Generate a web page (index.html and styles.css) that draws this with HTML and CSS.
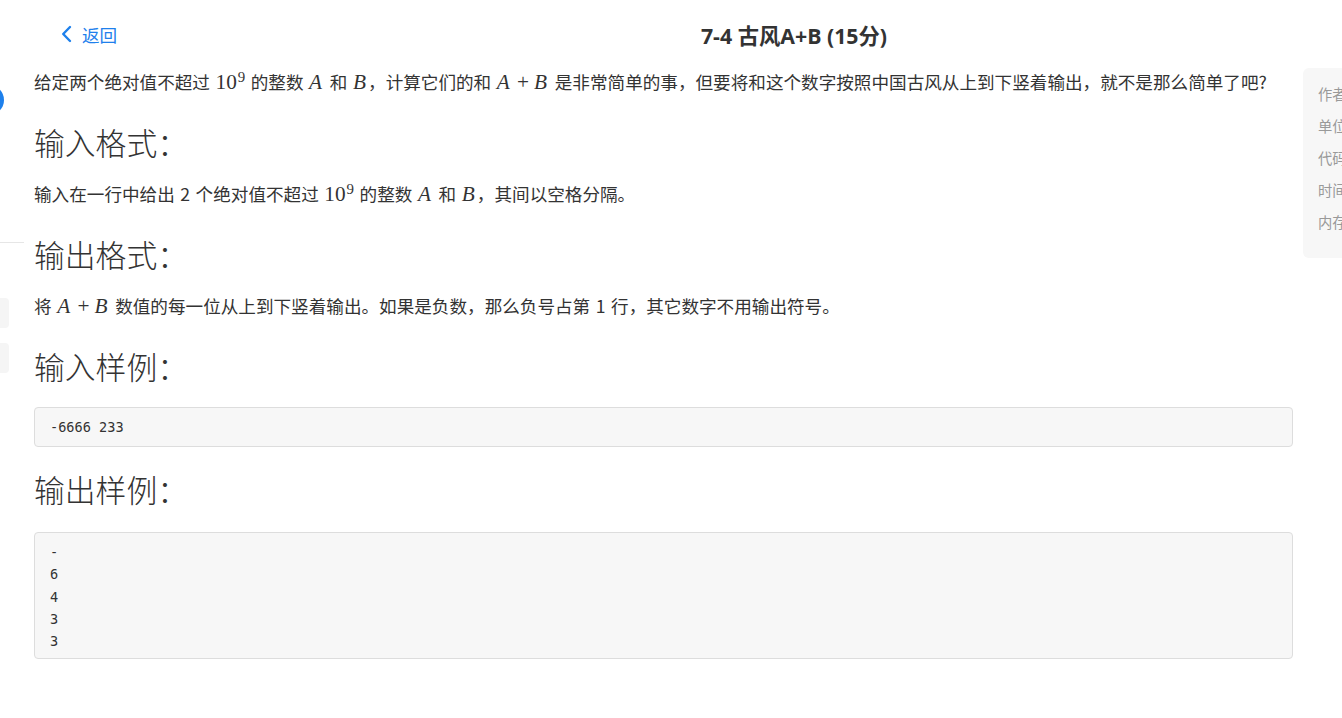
FILE: index.html
```html
<!DOCTYPE html>
<html>
<head>
<meta charset="utf-8">
<link rel="stylesheet" href="styles.css">
</head>
<body>

<div class="page">
  <div class="header">
    <a href="#" class="back">
      <svg class="back-icon" width="13" height="18" viewBox="0 0 13 18"><path d="M10 2 L3.2 9 L10 16" fill="none" stroke="currentColor" stroke-width="2.4" stroke-linecap="round" stroke-linejoin="round"/></svg>
      <span>返回</span>
    </a>
    <h1 class="title">7-4 古风A+B (15分)</h1>
    <div></div>
  </div>

  <div class="layout">
    <div class="sidebar">
      <div class="avatar"></div>
      <div class="divider"></div>
      <div class="side-item"></div>
      <div class="side-item"></div>
    </div>

    <div class="content">
      <p>给定两个绝对值不超过 <span class="math">10<sup>9</sup></span> 的整数 <span class="math"><i>A</i></span> 和 <span class="math"><i>B</i></span>，计算它们的和 <span class="math"><i>A</i><span class="op">+</span><i>B</i></span> 是非常简单的事，但要将和这个数字按照中国古风从上到下竖着输出，就不是那么简单了吧?</p>

      <h2>输入格式：</h2>
      <p>输入在一行中给出 2 个绝对值不超过 <span class="math">10<sup>9</sup></span> 的整数 <span class="math"><i>A</i></span> 和 <span class="math"><i>B</i></span>，其间以空格分隔。</p>

      <h2>输出格式：</h2>
      <p>将 <span class="math"><i>A</i><span class="op">+</span><i>B</i></span> 数值的每一位从上到下竖着输出。如果是负数，那么负号占第 1 行，其它数字不用输出符号。</p>

      <h2>输入样例：</h2>
      <pre class="sample">-6666 233</pre>

      <h2>输出样例：</h2>
      <pre class="sample sample-tall">-
6
4
3
3</pre>
    </div>

    <div class="info">
      <div class="info-row">作者 CHEN, Yue</div>
      <div class="info-row">单位 浙江大学</div>
      <div class="info-row">代码长度限制 16 KB</div>
      <div class="info-row">时间限制 400 ms</div>
      <div class="info-row">内存限制 64 MB</div>
    </div>
  </div>
</div>

</body>
</html>
```

FILE: styles.css
```css
html, body {
  margin: 0;
  padding: 0;
  overflow: hidden;
  background-color: #fff;
}

body {
  font-family: "Noto Sans CJK SC", "Noto Sans", sans-serif;
  color: #333;
}

.page {
  width: 1588px;
}

.header {
  height: 68px;
  display: grid;
  grid-template-columns: 1fr auto 1fr;
  align-items: center;
}

.back {
  display: flex;
  align-items: center;
  padding-left: 60px;
  color: #1e80ec;
  text-decoration: none;
  font-size: 17.6px;
}

.back-icon {
  margin-right: 9px;
  margin-top: -1px;
}

.title {
  margin: 0;
  font-family: "Open Sans", "Noto Sans CJK SC", sans-serif;
  font-size: 21.3px;
  font-weight: 700;
  color: #333;
}

.layout {
  display: flex;
  align-items: flex-start;
}

.sidebar {
  width: 24px;
  flex-shrink: 0;
  display: flex;
  flex-direction: column;
  overflow: hidden;
  margin-top: -68px;
  padding-top: 85px;
}

.avatar {
  width: 30px;
  height: 30px;
  border-radius: 50%;
  background-color: #1e80ec;
  margin-left: -26px;
}

.divider {
  height: 1px;
  background-color: #e6e6e6;
  margin-top: 127px;
}

.side-item {
  width: 9px;
  height: 30px;
  background-color: #f5f5f5;
  border-radius: 0 4px 4px 0;
  margin-top: 55px;
}

.side-item + .side-item {
  margin-top: 15px;
}

.content {
  width: 1259px;
  flex-shrink: 0;
  margin-left: 10px;
  padding-top: 2px;
}

.content p {
  margin: 0 0 25px;
  font-size: 17.6px;
  line-height: 24px;
  word-spacing: 1.6px;
  white-space: nowrap;
}

.content h2 {
  margin: 0 0 18px;
  font-size: 30.8px;
  font-weight: 300;
  line-height: 45px;
}

.math {
  font-family: "Liberation Serif", "DejaVu Serif", serif;
  font-size: 1.21em;
  line-height: 1;
  word-spacing: 0;
}

.math i {
  font-style: italic;
  padding-right: 0.1em;
}

.math .op {
  margin: 0 0.24em;
}

.math sup {
  font-size: 0.7em;
  vertical-align: 0.45em;
  line-height: 0;
  margin-left: 1px;
}

.sample {
  margin: 19px 0 19px;
  padding: 8px 15px 8px;
  background-color: #f7f7f7;
  border: 1px solid #ddd;
  border-radius: 4px;
  font-family: "DejaVu Sans Mono", "Liberation Mono", monospace;
  font-size: 13.6px;
  line-height: 22.2px;
  color: #333;
}

.sample-tall {
  margin-top: 21px;
  padding-bottom: 6px;
}

.info {
  width: 260px;
  flex-shrink: 0;
  margin-left: 10px;
  padding: 10px 15px 20px;
  background-color: #f7f7f7;
  border-radius: 6px;
  box-sizing: border-box;
}

.info-row {
  font-size: 14.3px;
  line-height: 32px;
  color: #999;
  white-space: nowrap;
}
```
